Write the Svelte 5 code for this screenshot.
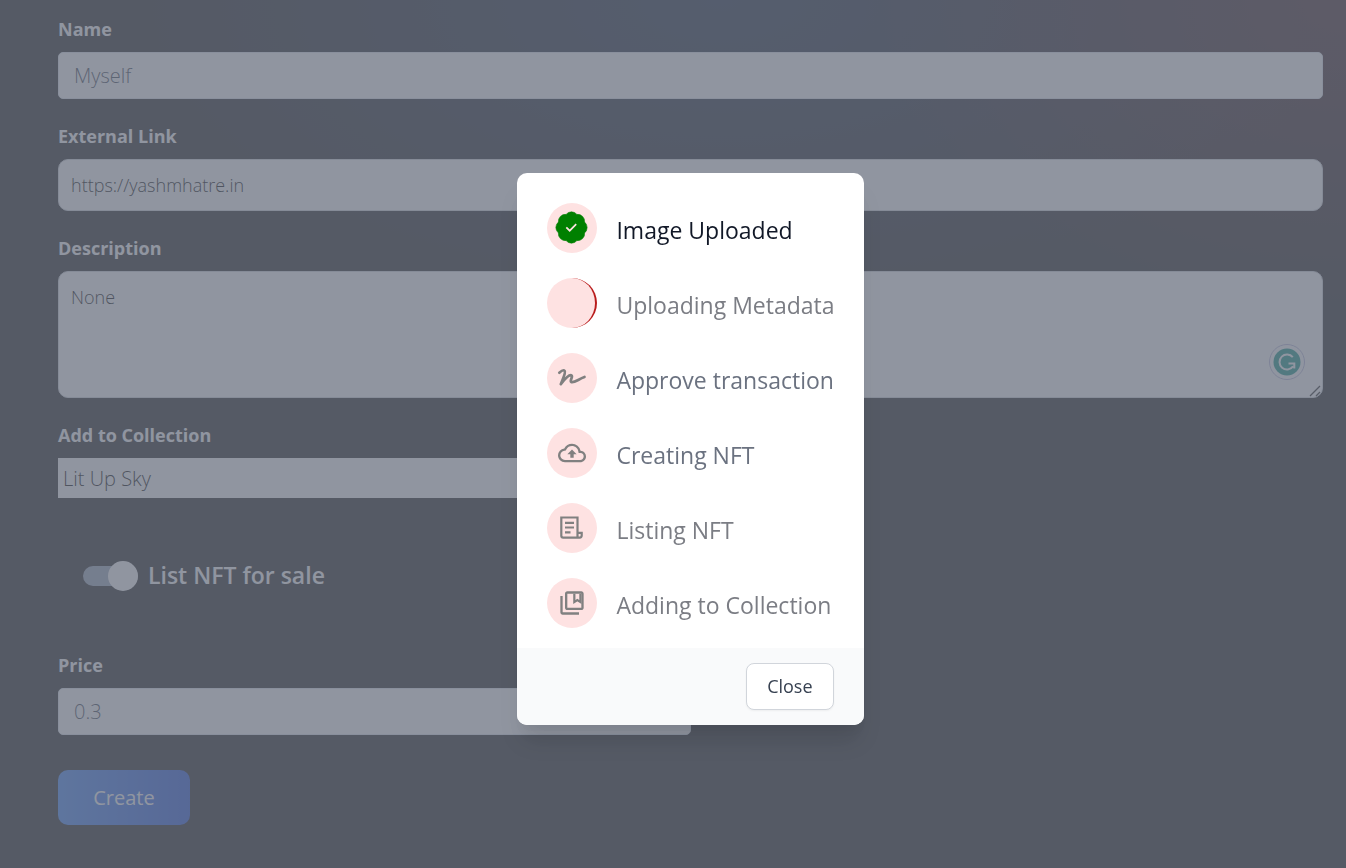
<script>
  const steps = [
    { label: 'Image Uploaded', icon: 'check', tone: 'done' },
    { label: 'Uploading Metadata', icon: 'spinner', tone: 'soft' },
    { label: 'Approve transaction', icon: 'sign', tone: 'muted' },
    { label: 'Creating NFT', icon: 'cloud', tone: 'muted' },
    { label: 'Listing NFT', icon: 'receipt', tone: 'soft' },
    { label: 'Adding to Collection', icon: 'collection', tone: 'soft' }
  ];
  let open = $state(true);
  let forSale = $state(true);
  let description = $state('None');
</script>

<main class="page">
  <form class="form" onsubmit={(e) => e.preventDefault()}>
    <div class="field">
      <label for="name">Name</label>
      <input id="name" class="text-input" type="text" placeholder="Myself" />
    </div>

    <div class="field">
      <label for="link">External Link</label>
      <input id="link" class="link-input" type="text" value="https://yashmhatre.in" />
    </div>

    <div class="field">
      <label for="description">Description</label>
      <div class="area">
        <textarea id="description" bind:value={description}></textarea>
        <svg class="assistant" viewBox="0 0 36 36" aria-hidden="true">
          <circle cx="18" cy="18" r="17.5" fill="none" stroke="#b4b6d8" />
          <circle cx="18" cy="18" r="13.5" fill="#0a9080" />
          <path d="M23.800 13.200a7.500 7.500 0 1 0 .3 9.200M19.500 19.500h5.800v5" fill="none" stroke="#fff" stroke-width="2" />
        </svg>
        <svg class="grip" viewBox="0 0 12 12" aria-hidden="true">
          <path d="M1 11 11 1M7 11l4-4" fill="none" stroke="#222" stroke-width="1.300" />
        </svg>
      </div>
    </div>

    <div class="field half">
      <label for="collection">Add to Collection</label>
      <select id="collection"><option>Lit Up Sky</option></select>
    </div>

    <label class="switch">
      <input type="checkbox" bind:checked={forSale} />
      <span class="track"></span>
      <span class="switch-text">List NFT for sale</span>
    </label>

    <div class="field half">
      <label for="price">Price</label>
      <input id="price" class="text-input" type="text" placeholder="0.3" />
    </div>

    <button class="create" type="submit">Create</button>
  </form>
</main>

{#if open}
  <div class="overlay">
    <div class="dialog" role="dialog" aria-modal="true" aria-label="Progress">
      <ul class="steps">
        {#each steps as step}
          <li class={step.tone}>
            <span class="badge" class:spinner={step.icon === 'spinner'}>
              {#if step.icon === 'check'}
                <svg viewBox="0 0 50 50" aria-hidden="true">
                  <path fill="green" stroke="green" stroke-width="0.600" stroke-linejoin="round" d="M19.100 11.400A7 7 0 0 1 29.900 11.400A7 7 0 0 1 37.600 19.100A7 7 0 0 1 37.600 29.900A7 7 0 0 1 29.900 37.600A7 7 0 0 1 19.100 37.600A7 7 0 0 1 11.400 29.900A7 7 0 0 1 11.400 19.100A7 7 0 0 1 19.100 11.400z" />
                  <path d="m19.300 24.300 3.400 3.400 6.500-6.500" fill="none" stroke="#fee2e2" stroke-width="1.700" />
                </svg>
              {:else if step.icon === 'sign'}
                <svg viewBox="0 0 50 50" aria-hidden="true">
                  <path d="M12.300 19.700c1.700-1.500 4.300-3 5.300-1.900 1.500 1.800-1.800 7.800-3.800 13.400 3.500-4.700 8-9.600 10.500-9 2.300.7-2 6-.1 6.800 2.800 1.300 7.300-2.900 13.300-5" fill="none" stroke="gray" stroke-width="2.700" stroke-linecap="round" stroke-linejoin="round" />
                </svg>
              {:else if step.icon === 'cloud'}
                <svg class="material" viewBox="0 0 24 24" aria-hidden="true">
                  <path fill="gray" d="M19.350 10.040A7.490 7.490 0 0 0 12 4C9.110 4 6.600 5.640 5.350 8.040A5.994 5.994 0 0 0 0 14c0 3.310 2.690 6 6 6h13c2.760 0 5-2.240 5-5 0-2.640-2.050-4.780-4.650-4.960zM19 18H6c-2.210 0-4-1.790-4-4 0-2.050 1.530-3.760 3.560-3.970l1.070-.11.5-.950A5.469 5.469 0 0 1 12 6c2.620 0 4.880 1.860 5.390 4.430l.3 1.500 1.530.11A2.980 2.980 0 0 1 22 15c0 1.650-1.350 3-3 3zM8 13h2.550v3h2.900v-3H16l-4-4z" />
                </svg>
              {:else if step.icon === 'receipt'}
                <svg viewBox="0 0 50 50" aria-hidden="true">
                  <path d="M30.500 34.500v-20H14.300v18.200c0 1.100.8 1.900 1.900 1.900h16.500c1.100 0 2-.9 2-2v-2.800h-4.200M18 19.800h9M18 24.500h9M18 29.300h5.500" fill="none" stroke="gray" stroke-width="2.200" />
                </svg>
              {:else if step.icon === 'collection'}
                <svg class="material" viewBox="0 0 24 24" aria-hidden="true">
                  <path fill="gray" d="M4 6H2v14c0 1.100.9 2 2 2h14v-2H4V6zm16-4H8c-1.100 0-2 .9-2 2v12c0 1.100.9 2 2 2h12c1.100 0 2-.9 2-2V4c0-1.100-.9-2-2-2zm0 14H8V4h12v12z" />
                  <path d="M14 4v7.200l2.600-1.700 2.600 1.700V4" fill="none" stroke="gray" stroke-width="1.900" />
                </svg>
              {/if}
            </span>
            <span class="label">{step.label}</span>
          </li>
        {/each}
      </ul>
      <div class="footer">
        <button class="close" type="button" onclick={() => (open = false)}>Close</button>
      </div>
    </div>
  </div>
{/if}

<style>
  :global(body) {
    font-family: 'Open Sans', 'Noto Sans', sans-serif;
    font-size: 20px;
    background: #141414;
  }

  .page {
    box-sizing: border-box;
    min-height: 100vh;
    padding: 16px 23px 43px 58px;
    background:
      radial-gradient(ellipse 480px 330px at 100% 0, rgba(84, 28, 38, 0.55), transparent),
      radial-gradient(ellipse 620px 310px at 720px 0, rgba(24, 40, 72, 0.7), transparent);
  }

  .form {
    display: flex;
    flex-direction: column;
    gap: 24px;
  }

  .field {
    display: flex;
    flex-direction: column;
    gap: 10px;
  }

  .half {
    width: 50%;
  }

  .field label {
    color: #fff;
    font-size: 18px;
    line-height: 26px;
    font-weight: 700;
  }

  input,
  textarea,
  select,
  button {
    box-sizing: border-box;
    margin: 0;
    font-family: inherit;
  }

  .text-input {
    height: 47px;
    padding: 0 15px;
    border: 1px solid #e2e8f0;
    border-radius: 5px;
    background: #fff;
    color: #374151;
    font-size: 20px;
    font-weight: 300;
  }

  .text-input::placeholder {
    color: #374151;
    opacity: 1;
  }

  .link-input,
  textarea {
    width: 100%;
    border: 1px solid #d1d5db;
    border-radius: 10px;
    background: #fff;
    color: #000;
    font-size: 18px;
    font-weight: 300;
  }

  .link-input {
    height: 52px;
    padding: 0 12px;
  }

  .area {
    position: relative;
    display: flex;
  }

  textarea {
    height: 127px;
    padding: 12px;
    line-height: 26px;
    resize: none;
  }

  .assistant {
    position: absolute;
    right: 18px;
    bottom: 18px;
    width: 36px;
    height: 36px;
  }

  .grip {
    position: absolute;
    right: 2px;
    bottom: 1px;
    width: 12px;
    height: 12px;
  }

  select {
    height: 40px;
    padding: 0 5px;
    border: 0;
    border-radius: 0;
    background: #fff;
    color: #000;
    font-size: 20px;
    font-weight: 300;
    appearance: none;
  }

  .switch {
    display: flex;
    align-items: center;
    gap: 10px;
    align-self: flex-start;
    height: 30px;
    margin: 39px 0 37px 25px;
    color: #fff;
    font-size: 23px;
    line-height: 30px;
    font-weight: 600;
  }

  .switch input {
    position: absolute;
    opacity: 0;
  }

  .switch-text {
    padding-bottom: 2px;
  }

  .track {
    display: flex;
    align-items: center;
    width: 55px;
    height: 20px;
    border-radius: 10px;
    background: #94a3b8;
  }

  .track::after {
    content: '';
    width: 30px;
    height: 30px;
    border-radius: 50%;
    background: #fff;
  }

  .switch input:checked + .track {
    justify-content: flex-end;
  }

  .create {
    align-self: flex-start;
    margin-top: 11px;
    width: 132px;
    height: 55px;
    border: 0;
    border-radius: 10px;
    background: linear-gradient(to right, #3b82f6, #1d4ed8);
    color: #fff;
    font-size: 20px;
    font-weight: 500;
  }

  .overlay {
    position: fixed;
    inset: 0;
    box-sizing: border-box;
    display: flex;
    align-items: center;
    justify-content: center;
    padding: 30px 0 0 35px;
    background: rgba(107, 114, 128, 0.75);
  }

  .dialog {
    overflow: hidden;
    border-radius: 10px;
    background: #fff;
    box-shadow:
      0 20px 25px -5px rgba(0, 0, 0, 0.1),
      0 10px 10px -5px rgba(0, 0, 0, 0.04);
  }

  .steps {
    display: flex;
    flex-direction: column;
    gap: 25px;
    margin: 0;
    padding: 30px 29px 20px 30px;
    list-style: none;
  }

  .steps li {
    display: flex;
    align-items: center;
    gap: 19px;
    font-size: 23px;
    line-height: 30px;
  }

  .label {
    padding-top: 4px;
  }

  .done {
    color: #111827;
  }

  .muted {
    color: #6b7280;
  }

  .soft {
    color: #7b7d84;
  }

  .badge {
    box-sizing: border-box;
    display: flex;
    align-items: center;
    justify-content: center;
    width: 50px;
    height: 50px;
    border-radius: 50%;
    background: #fee2e2;
  }

  .badge svg {
    width: 50px;
    height: 50px;
  }

  .badge .material {
    width: 28px;
    height: 28px;
  }

  .spinner {
    border-right: 2px solid #b91c1c;
  }

  .footer {
    display: flex;
    justify-content: flex-end;
    padding: 15px 30px;
    background: #f9fafb;
  }

  .close {
    height: 47px;
    padding: 0 20px 2px;
    border: 1px solid #d1d5db;
    border-radius: 8px;
    background: #fff;
    color: #374151;
    font-size: 18px;
    box-shadow: 0 1px 2px rgba(0, 0, 0, 0.05);
  }
</style>
